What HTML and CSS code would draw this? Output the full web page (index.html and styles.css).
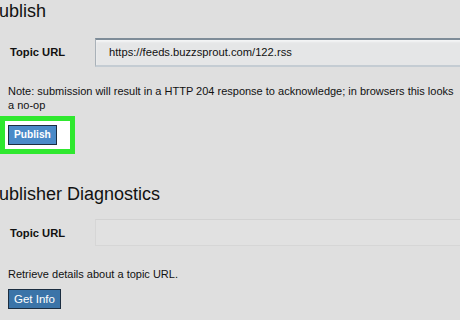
FILE: index.html
```html
<!DOCTYPE html>
<html lang="en">
<head>
<meta charset="UTF-8" />
<title>Publish</title>
<link rel="stylesheet" href="styles.css">
</head>
<body>

<div class="page">
  <h2 class="section-title">Publish</h2>
  <div class="field">
    <label class="field-label">Topic URL</label>
    <div class="field-input filled">https://feeds.buzzsprout.com/122.rss</div>
  </div>
  <p class="note">Note: submission will result in a HTTP 204 response to acknowledge; in browsers this looks a no-op</p>
  <div class="highlight">
    <button class="btn">Publish</button>
  </div>

  <h2 class="section-title second">Publisher Diagnostics</h2>
  <div class="field">
    <label class="field-label">Topic URL</label>
    <div class="field-input empty"></div>
  </div>
  <p class="note info">Retrieve details about a topic URL.</p>
  <button class="btn dark">Get Info</button>
</div>

</body>
</html>
```

FILE: styles.css
```css
html, body {
  margin: 0;
  background: #dfdfdf;
}
body {
  font-family: "Liberation Sans", Arial, sans-serif;
  color: #111;
  overflow: hidden;
}
.page {
  padding: 0 0 0 8px;
}
.section-title {
  font-size: 18px;
  font-weight: normal;
  line-height: 22px;
  margin: 0 0 16px -21px;
  color: #111;
}
.section-title.second {
  margin-top: 29px;
  margin-bottom: 14px;
}
.field {
  display: flex;
  align-items: flex-start;
}
.field-label {
  width: 85px;
  padding: 7px 0 0 2px;
  font-size: 11.2px;
  font-weight: bold;
  line-height: 14px;
}
.field-input {
  flex: 1;
  margin-right: -20px;
  font-size: 11.2px;
  line-height: 25px;
  padding: 0 13px;
  height: 25px;
}
.field-input.filled {
  border-top: 2px solid #7e8c98;
  border-left: 1px solid #a9b1b8;
  border-bottom: 2px solid #c4ccd3;
  background: #e5e6e7;
  box-shadow: inset 0 2px 2px #f4f5f6;
}
.field-input.empty {
  border-top: 1px solid #d2d2d2;
  border-left: 1px solid #d6d6d6;
  border-bottom: 1px solid #d6d6d6;
  background: #e1e1e1;
}
.note {
  font-size: 11px;
  line-height: 14px;
  margin: 17px 5px 4px 0;
}
.note.info {
  margin: 21px 0 8px 0;
}
.highlight {
  display: inline-block;
  margin-left: -8px;
  border: 5px solid #2fe82f;
  background: #fff;
  padding: 4px 13px 4px 3px;
}
.btn {
  display: block;
  font-family: "Liberation Sans", Arial, sans-serif;
  font-size: 10.2px;
  font-weight: bold;
  color: #fff;
  background: #4a8ac8;
  border: 1px solid #1b2d40;
  padding: 0 5px;
  height: 20px;
  line-height: 18px;
}
.btn.dark {
  background: #3b74a8;
  font-weight: normal;
  font-size: 11.5px;
  padding: 0 5px;
}
```
